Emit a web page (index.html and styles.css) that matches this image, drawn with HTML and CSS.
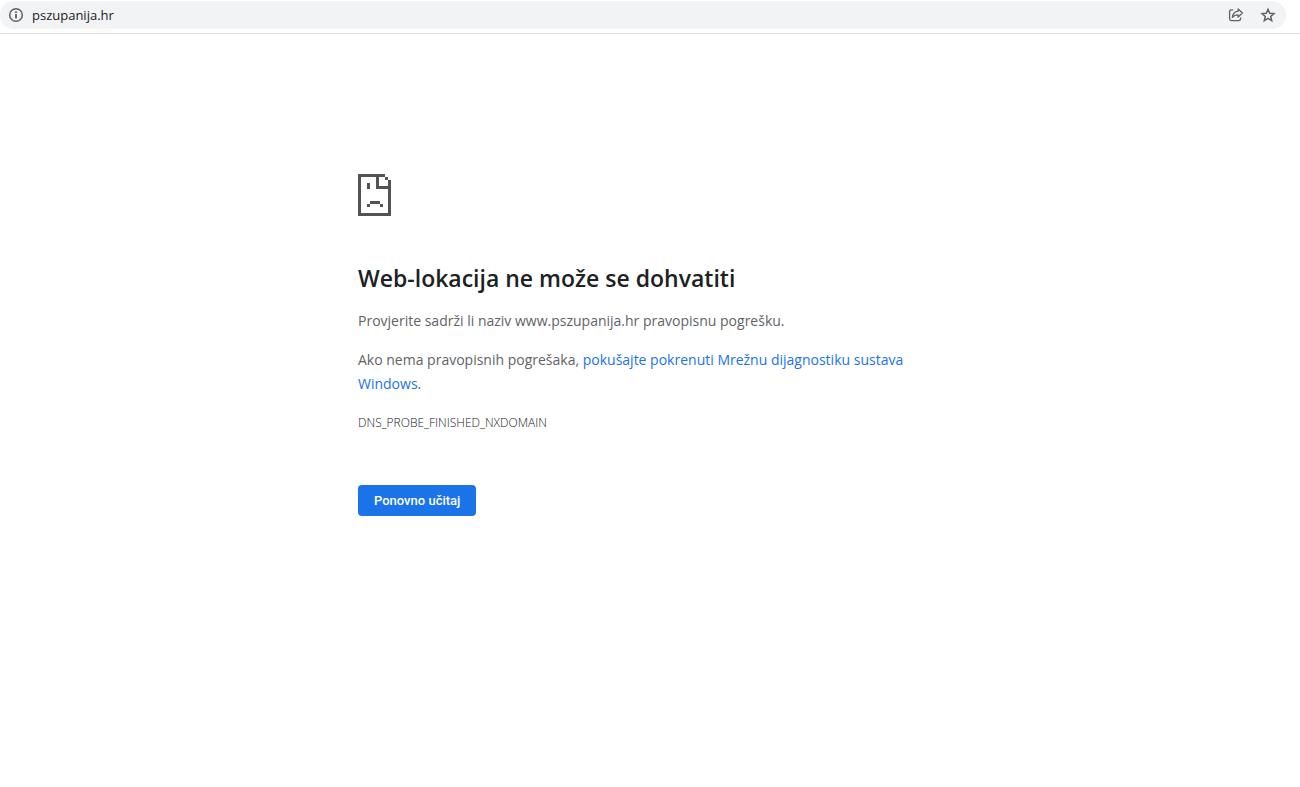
FILE: index.html
```html
<!DOCTYPE html>
<html lang="hr">
<head>
    <meta charset="UTF-8">
    <meta name="viewport" content="width=device-width, initial-scale=1.0">
    <title>pszupanija.hr</title>
    <link rel="stylesheet" href="styles.css">
</head>
<body>
    <header class="toolbar">
        <div class="omnibox">
            <button class="icon-button" type="button" aria-label="Podaci o web-lokaciji">
                <svg width="16" height="16" viewBox="0 0 16 16" fill="none" stroke="currentColor">
                    <circle cx="8" cy="8" r="6.3" stroke-width="1.5"/>
                    <path d="M8 7v4.500M8 4.300v1.700" stroke-width="1.8"/>
                </svg>
            </button>
            <input class="address" type="text" value="pszupanija.hr" aria-label="Adresa" spellcheck="false">
            <div class="actions">
                <button class="icon-button" type="button" aria-label="Dijeli">
                    <svg width="16" height="16" viewBox="0 0 16 16" fill="none" stroke="currentColor" stroke-width="1.3" stroke-linejoin="round">
                        <path d="M5.2 2.8H3.4a1.8 1.8 0 0 0-1.8 1.8v7.2a1.8 1.8 0 0 0 1.8 1.8h7.400a1.8 1.8 0 0 0 1.8-1.8v-1.2"/>
                        <path d="M10.100 2l4.400 4-4.400 4V7.800C7.300 7.800 5.800 8.600 4.400 10.400 4.800 7 6.600 4.600 10.100 4.200z"/>
                    </svg>
                </button>
                <button class="icon-button" type="button" aria-label="Dodaj oznaku">
                    <svg width="16" height="16" viewBox="0 0 16 16" fill="none" stroke="currentColor" stroke-width="1.5">
                        <path d="M8 2.300l1.700 3.900 4.200.4-3.200 2.800 1 4.200L8 11.400l-3.700 2.200 1-4.200-3.200-2.800 4.200-.4z"/>
                    </svg>
                </button>
            </div>
        </div>
    </header>
    <main class="content">
        <svg class="error-icon" width="33" height="42" viewBox="0 0 33 42" shape-rendering="crispEdges" aria-hidden="true">
            <path d="M0 0h27v3h3v3h3v36H0zM3 3v36h27V15H18V3zM21 3v9h9V6h-3V3z" fill-rule="evenodd"/>
            <path d="M9 9h3v6H9zM12 27h10v3H12zM9 30h3v3H9zM22 30h3v3h-3z"/>
        </svg>
        <h1>Web-lokacija ne može se dohvatiti</h1>
        <p>Provjerite sadrži li naziv www.pszupanija.hr pravopisnu pogrešku.</p>
        <p>Ako nema pravopisnih pogrešaka, <a href="#">pokušajte pokrenuti Mrežnu dijagnostiku sustava Windows</a>.</p>
        <div class="error-code">DNS_PROBE_FINISHED_NXDOMAIN</div>
        <button class="reload" type="button">Ponovno učitaj</button>
    </main>
</body>
</html>
```
FILE: styles.css
```css
:root {
    --text: #5f6368;
    --heading: #202124;
    --accent: #1a73e8;
    --field: #f1f3f4;
}

body {
    margin: 0;
    background: white;
    color: var(--text);
    font-family: "Segoe UI", "Open Sans", sans-serif;
    font-size: 14px;
    line-height: 24px;
}

.toolbar {
    padding: 1px 14px 4px 0;
    border-bottom: 1px solid #dadce0;
}

.omnibox {
    display: flex;
    align-items: center;
    height: 28px;
    padding: 0 10px 0 8px;
    background: var(--field);
    border-radius: 14px;
}

.icon-button {
    display: flex;
    padding: 0;
    border: none;
    background: none;
    color: var(--text);
    cursor: pointer;
}

.address {
    flex: 1;
    min-width: 0;
    padding: 0 8px;
    border: none;
    outline: none;
    background: none;
    color: var(--heading);
    font-family: inherit;
    font-size: 13px;
}

.actions {
    display: flex;
    gap: 16px;
}

.content {
    max-width: 584px;
    margin: 0 auto;
    padding: 140px 24px 0;
}

.error-icon {
    display: block;
    fill: #535353;
}

h1 {
    margin: 48px 0 16px;
    color: var(--heading);
    font-size: 23px;
    font-weight: 600;
    line-height: 29px;
}

p {
    margin: 0 0 15px;
}

a {
    color: var(--accent);
    text-decoration: none;
}

.error-code {
    color: var(--heading);
    font-size: 12px;
    font-weight: 300;
}

.reload {
    margin-top: 50px;
    padding: 8px 16px;
    border: none;
    border-radius: 4px;
    background: var(--accent);
    color: white;
    font-family: Roboto, Arial, sans-serif;
    font-size: 13px;
    font-weight: 500;
    line-height: 15px;
    cursor: pointer;
}

.reload:hover {
    background: #1765cc;
}
```
